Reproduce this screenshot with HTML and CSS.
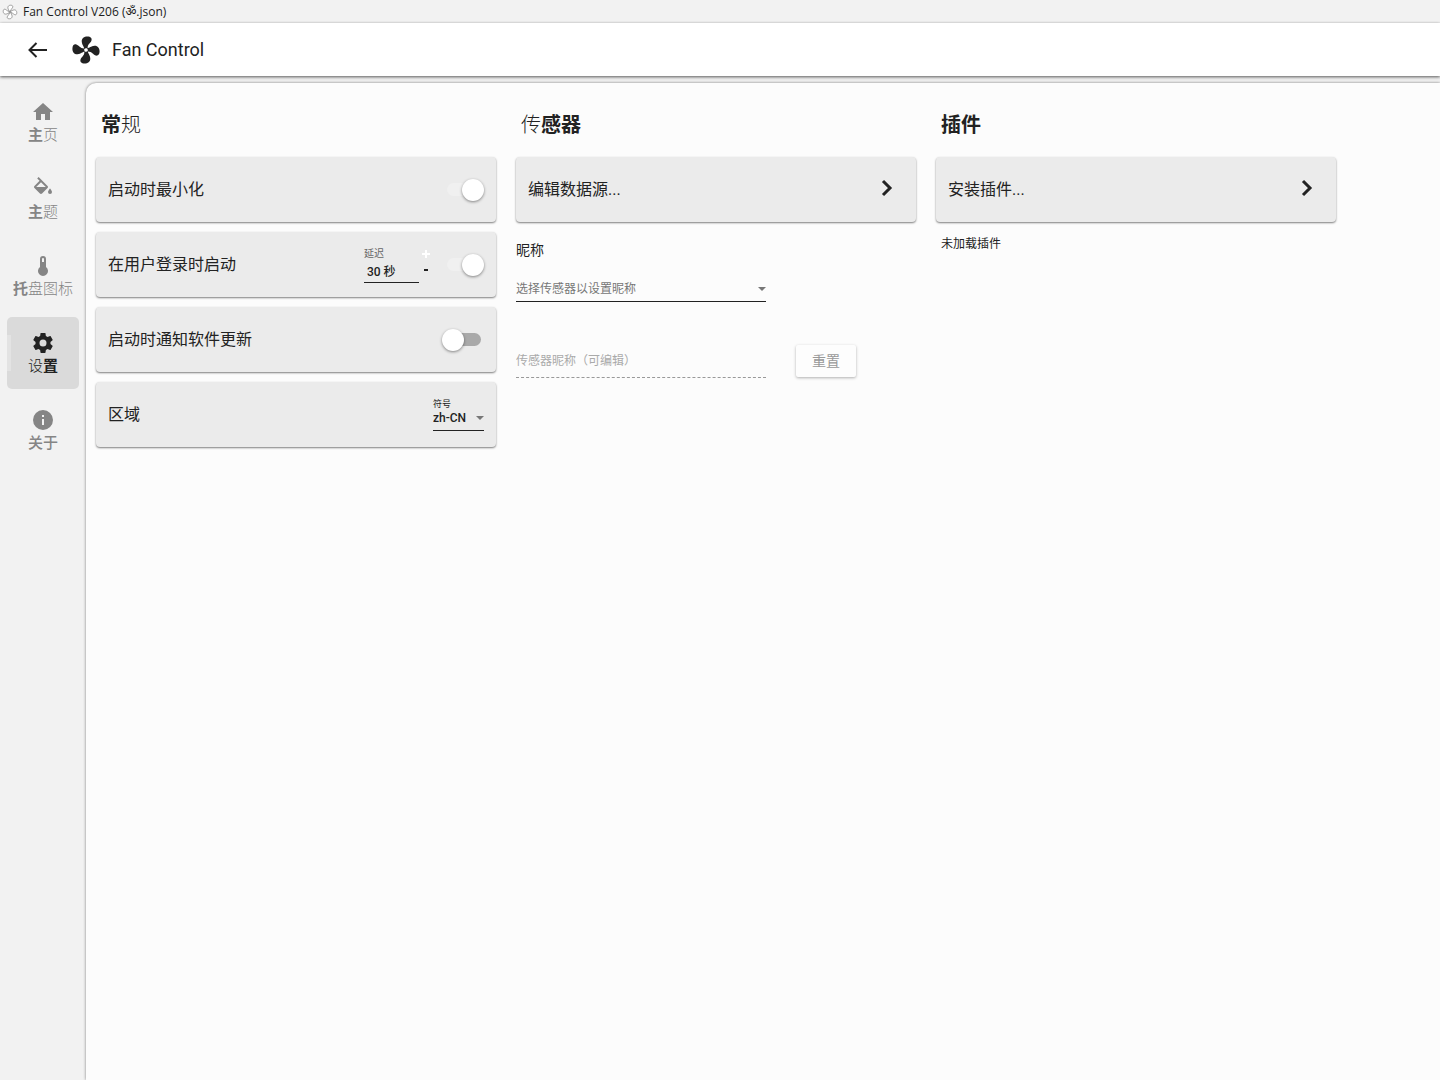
FILE: index.html
```html
<!DOCTYPE html>
<html lang="zh-CN">
<head>
<meta charset="utf-8">
<meta name="viewport" content="width=device-width, initial-scale=1">
<title>Fan Control</title>
<link rel="stylesheet" href="styles.css">
</head>
<body>
<svg class="defs" aria-hidden="true">
  <path id="blade" d="M10.600 11.400C10.800 9.400 9 8.600 8.800 5.600C8.700 3.200 10.600 1.800 13 1.800C15.600 1.800 16.600 3.200 16.100 4.800C15.500 6.800 13.200 7.400 13.200 10.600Z"/>
  <symbol id="fan" viewBox="0 0 24 24">
    <use href="#blade"/>
    <use href="#blade" transform="rotate(90 12 12)"/>
    <use href="#blade" transform="rotate(180 12 12)"/>
    <use href="#blade" transform="rotate(270 12 12)"/>
    <circle class="hub" cx="12" cy="12" r="1.300"/>
  </symbol>
</svg>
<div class="window">
  <div class="titlebar">
    <svg class="titlebar-icon"><use href="#fan"/></svg>
    <span>Fan Control V206 (ॐ.json)</span>
  </div>
  <header class="appbar">
    <button class="back" type="button" aria-label="返回">
      <svg viewBox="0 0 24 24"><path d="M21 12H4M10.5 5L3.5 12l7 7"/></svg>
    </button>
    <svg class="logo"><use href="#fan"/></svg>
    <h1>Fan Control</h1>
  </header>
  <div class="body">
    <nav class="nav">
      <a href="#home"><svg viewBox="0 0 24 24"><path d="M10,20V14H14V20H19V12H22L12,3L2,12H5V20H10Z"/></svg><span><b>主</b>页</span></a>
      <a href="#theme"><svg viewBox="0 0 24 24"><path d="M19,11.5C19,11.5 17,13.67 17,15A2,2 0 0,0 19,17A2,2 0 0,0 21,15C21,13.67 19,11.5 19,11.5M5.21,10L10,5.21L14.79,10M16.56,8.94L7.62,0L6.21,1.41L8.59,3.79L3.44,8.94C2.85,9.5 2.85,10.47 3.44,11.06L8.94,16.56C9.23,16.85 9.62,17 10,17C10.38,17 10.77,16.85 11.06,16.56L16.56,11.06C17.15,10.47 17.15,9.5 16.56,8.94Z"/></svg><span><b>主</b>题</span></a>
      <a href="#tray"><svg viewBox="0 0 24 24"><path d="M15 13V5A3 3 0 0 0 9 5V13A5 5 0 1 0 15 13M12 4A1 1 0 0 1 13 5V8H11V5A1 1 0 0 1 12 4Z"/></svg><span><b>托</b>盘图标</span></a>
      <a href="#settings" class="active" aria-current="page"><svg viewBox="0 0 24 24"><path d="M12,15.5A3.5,3.5 0 0,1 8.5,12A3.5,3.5 0 0,1 12,8.5A3.5,3.5 0 0,1 15.5,12A3.5,3.5 0 0,1 12,15.5M19.43,12.97C19.47,12.65 19.5,12.33 19.5,12C19.5,11.67 19.47,11.34 19.43,11L21.54,9.37C21.73,9.22 21.78,8.95 21.66,8.73L19.66,5.27C19.54,5.05 19.27,4.96 19.05,5.05L16.56,6.05C16.04,5.66 15.5,5.32 14.87,5.07L14.5,2.42C14.46,2.18 14.25,2 14,2H10C9.75,2 9.54,2.18 9.5,2.42L9.13,5.07C8.5,5.32 7.96,5.66 7.44,6.05L4.95,5.05C4.73,4.96 4.46,5.05 4.34,5.27L2.34,8.73C2.21,8.95 2.27,9.22 2.46,9.37L4.57,11C4.53,11.34 4.5,11.67 4.5,12C4.5,12.33 4.53,12.65 4.57,12.97L2.46,14.63C2.27,14.78 2.21,15.05 2.34,15.27L4.34,18.73C4.46,18.95 4.73,19.03 4.95,18.95L7.44,17.94C7.96,18.34 8.5,18.68 9.13,18.93L9.5,21.58C9.54,21.82 9.75,22 10,22H14C14.25,22 14.46,21.82 14.5,21.58L14.87,18.93C15.5,18.67 16.04,18.34 16.56,17.94L19.05,18.95C19.27,19.03 19.54,18.95 19.66,18.73L21.66,15.27C21.78,15.05 21.73,14.78 21.54,14.63L19.43,12.97Z"/></svg><span>设<b>置</b></span></a>
      <a href="#about"><svg viewBox="0 0 24 24"><path d="M13,9H11V7H13M13,17H11V11H13M12,2A10,10 0 0,0 2,12A10,10 0 0,0 12,22A10,10 0 0,0 22,12A10,10 0 0,0 12,2Z"/></svg><span><em>关于</em></span></a>
    </nav>
    <main class="content">
      <section class="column">
        <h2><b>常</b>规</h2>
        <div class="card">
          <label class="card-label" for="minimize">启动时最小化</label>
          <input class="switch" id="minimize" type="checkbox" checked>
        </div>
        <div class="card">
          <label class="card-label" for="logon">在用户登录时启动</label>
          <div class="delay">
            <div class="field">
              <label for="delay">延迟</label>
              <input id="delay" type="text" value="30 秒">
            </div>
            <div class="steps">
              <button class="plus" type="button" aria-label="增加"><svg viewBox="0 0 10 10"><path d="M5 1v8M1 5h8"/></svg></button>
              <button type="button" aria-label="减少"><svg viewBox="0 0 10 10"><path d="M3 5h4"/></svg></button>
            </div>
          </div>
          <input class="switch" id="logon" type="checkbox" checked>
        </div>
        <div class="card">
          <label class="card-label" for="notify">启动时通知软件更新</label>
          <input class="switch" id="notify" type="checkbox">
        </div>
        <div class="card">
          <span class="card-label">区域</span>
          <div class="field region">
            <label for="region">符号</label>
            <div class="select"><select id="region"><option>zh-CN</option></select></div>
          </div>
        </div>
      </section>
      <section class="column">
        <h2>传<b>感器</b></h2>
        <button class="card" type="button">
          <span class="card-label">编辑数据源...</span>
          <svg class="chevron" viewBox="0 0 24 24"><path d="M9 5l7 7-7 7"/></svg>
        </button>
        <div class="nickname">
          <h3>昵称</h3>
          <div class="select"><select aria-label="昵称"><option>选择传感器以设置昵称</option></select></div>
          <div class="row">
            <input type="text" placeholder="传感器昵称（可编辑）" aria-label="传感器昵称" disabled>
            <button class="reset" type="button" disabled>重置</button>
          </div>
        </div>
      </section>
      <section class="column">
        <h2><b>插件</b></h2>
        <button class="card" type="button">
          <span class="card-label">安装插件...</span>
          <svg class="chevron" viewBox="0 0 24 24"><path d="M9 5l7 7-7 7"/></svg>
        </button>
        <p class="note">未加载插件</p>
      </section>
    </main>
  </div>
</div>
</body>
</html>
```
FILE: styles.css
```css
* { box-sizing: border-box; }

body {
  margin: 0;
  background: #f2f2f2;
  color: #222;
  font-family: Roboto, "Noto Sans CJK SC", sans-serif;
  font-size: 16px;
}

button, input, select {
  margin: 0;
  padding: 0;
  border: 0;
  border-radius: 0;
  background: none;
  color: inherit;
  font: inherit;
  appearance: none;
  outline: none;
}

h1, h2, h3, p { margin: 0; font-weight: 400; }

b { font-weight: 700; }

.defs { position: absolute; width: 0; height: 0; }
.hub { fill: #fff; }

.window {
  display: flex;
  flex-direction: column;
  min-height: 100vh;
}

/* Window title */
.titlebar {
  display: flex;
  align-items: center;
  gap: 5px;
  height: 23px;
  padding-left: 2px;
  background: #f2f2f2;
  color: #1c1c1c;
  font: 12px/22px "Open Sans", "Noto Sans", sans-serif;
}

.titlebar-icon {
  width: 16px;
  height: 16px;
  overflow: visible;
  fill: #fff;
  stroke: #777;
  stroke-width: 1px;
}

.appbar {
  position: relative;
  display: flex;
  align-items: center;
  height: 53px;
  padding-left: 26px;
  background: #fff;
  box-shadow: 0 1px 3px rgba(0, 0, 0, .65);
}

.back { width: 24px; height: 24px; }

.back svg {
  display: block;
  fill: none;
  stroke: #222;
  stroke-width: 2;
}

.logo {
  width: 32px;
  height: 32px;
  margin: 0 10px 0 20px;
  fill: #222;
}

h1 { font-size: 18px; line-height: 24px; }

.body {
  display: flex;
  flex: 1;
  padding-top: 7px;
}

/* Side navigation */
.nav {
  display: flex;
  flex-direction: column;
  gap: 5px;
  width: 86px;
  padding: 3px 7px;
}

.nav a {
  display: flex;
  flex-direction: column;
  align-items: center;
  height: 72px;
  padding-top: 14px;
  border-radius: 5px;
  color: #858585;
  font-size: 15px;
  font-weight: 300;
  line-height: 22px;
  text-decoration: none;
  white-space: nowrap;
}

.nav svg { width: 24px; height: 24px; fill: currentColor; }
.nav em { font-style: normal; font-weight: 500; }

.nav .active {
  position: relative;
  background: #dadada;
  color: #222;
}

.nav .active::before {
  content: "";
  position: absolute;
  left: 0;
  top: 18px;
  width: 4px;
  height: 36px;
  background: #e3e3e3;
}

/* Settings page */
.content {
  display: flex;
  flex: 1;
  gap: 20px;
  padding: 27px 10px;
  border-radius: 10px 0 0 0;
  background: #fcfcfc;
  box-shadow: 0 0 3px rgba(0, 0, 0, .5);
}

.column {
  display: flex;
  flex-direction: column;
  gap: 10px;
  width: 400px;
}

h2 {
  padding: 0 5px;
  margin-bottom: 7px;
  font-size: 20px;
  font-weight: 300;
  line-height: 30px;
}

.card {
  display: flex;
  align-items: center;
  width: 100%;
  height: 65px;
  padding: 0 12px;
  border-radius: 4px;
  background: #ebebeb;
  box-shadow: 0 1px 2px rgba(0, 0, 0, .5);
  text-align: left;
}

.card-label { flex: 1; line-height: 24px; }

.chevron {
  width: 24px;
  height: 24px;
  margin: 0 6px 4px;
  fill: none;
  stroke: #222;
  stroke-width: 3;
}

.switch {
  position: relative;
  display: flex;
  align-items: center;
  width: 42px;
  height: 22px;
}

.switch::before {
  content: "";
  width: 34px;
  height: 13px;
  margin-left: 5px;
  border-radius: 7px;
  background: #a9a9a9;
}

.switch::after {
  content: "";
  position: absolute;
  left: 0;
  width: 22px;
  height: 22px;
  border-radius: 50%;
  background: #fff;
  box-shadow: 0 1px 3px rgba(0, 0, 0, .45);
}

.switch:checked::before { background: #f0f0f0; }
.switch:checked::after { left: 20px; }

.delay { display: flex; gap: 2px; margin-right: 11px; }

.field {
  display: flex;
  flex-direction: column;
  width: 55px;
  font-size: 12px;
  font-weight: 500;
}

.field label {
  color: #666;
  font-size: 10px;
  font-weight: 400;
  line-height: 14px;
}

.field input {
  width: 100%;
  height: 22px;
  padding: 0 0 2px 3px;
  border-bottom: 1px solid #222;
}

.steps { display: flex; flex-direction: column; }

.steps button { display: flex; width: 10px; height: 16px; }

.steps svg {
  width: 10px;
  height: 10px;
  margin-top: 2px;
  fill: none;
  stroke: #222;
  stroke-width: 2;
}

.steps .plus svg { stroke: #fff; stroke-width: 2; }

.select {
  display: flex;
  align-items: center;
  border-bottom: 1px solid #222;
}

.select select { flex: 1; min-width: 0; }

.select::after {
  content: "";
  border: 4px solid transparent;
  border-top-color: #777;
  border-bottom: 0;
}

.region { width: 51px; }
.region label { color: #222; font-size: 9px; line-height: 12px; }
.region .select { padding-bottom: 4px; }
.region select { height: 16px; }

.nickname { padding: 8px 0 0; }

h3 { font-size: 14px; line-height: 20px; }

.nickname .select {
  width: 250px;
  height: 26px;
  margin-top: 16px;
  color: #777;
  font-size: 12px;
}

.row {
  display: flex;
  gap: 30px;
  margin-top: 43px;
}

.row input {
  width: 250px;
  height: 33px;
  border-bottom: 1px dashed #999;
  font-size: 12px;
}

.row input::placeholder { color: #aaa; opacity: 1; }

.reset {
  width: 60px;
  height: 32px;
  padding-bottom: 2px;
  border-radius: 2px;
  background: #fdfdfd;
  box-shadow: 0 1px 3px rgba(0, 0, 0, .3);
  color: #999;
  font-size: 14px;
}

.note { padding: 3px 5px; font-size: 12px; line-height: 18px; }
```
